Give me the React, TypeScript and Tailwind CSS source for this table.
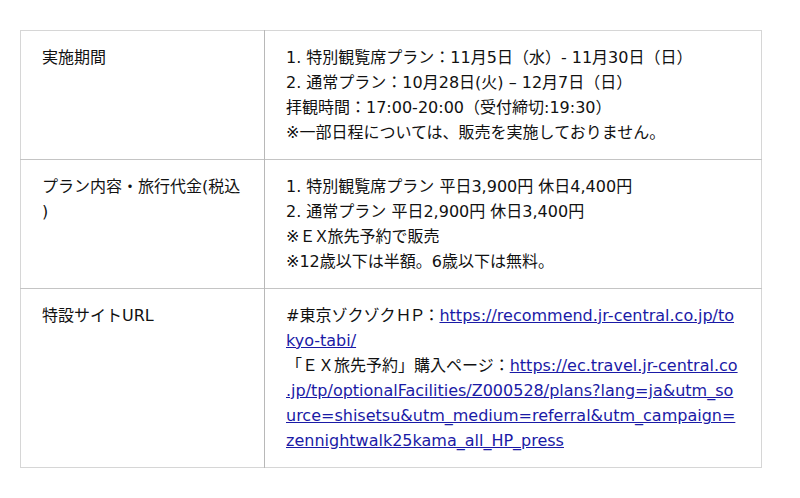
import type { ReactNode } from 'react'

// fullwidth latin in the reference sits a little tighter than Noto's 1em boxes
const Fw = ({ children }: { children: ReactNode }) => (
  <span className="tracking-[-2px]">{children}</span>
)

const periodLines = [
  '1. 特別観覧席プラン：11月5日（水）- 11月30日（日）',
  '2. 通常プラン：10月28日(火) – 12月7日（日）',
  '拝観時間：17:00-20:00（受付締切:19:30）',
  '※一部日程については、販売を実施しておりません。',
]

const travelUrl =
  'https://ec.travel.jr-central.co.jp/tp/optionalFacilities/Z000528/plans?lang=ja&utm_source=shisetsu&utm_medium=referral&utm_campaign=zennightwalk25kama_all_HP_press'

const cell = 'align-top pl-[21px] pr-[21px] pt-[14px] pb-[14px] [line-break:anywhere]'
const labelCell = `${cell} border-r border-[#b8b8b8]`

export default function App() {
  return (
    <div className="min-h-[498px] bg-white pt-[30px] pl-[20px] font-['DejaVu_Sans','Noto_Sans_CJK_JP',sans-serif] text-[16px] leading-[25px] text-[#111]">
      <table className="w-[742px] table-fixed border-collapse border border-[#d6d6d6]">
        <colgroup>
          <col className="w-[244px]" />
          <col />
        </colgroup>
        <tbody>
          <tr className="border-b border-[#c4c4c4]">
            <td className={labelCell}>実施期間</td>
            <td className={cell}>
              {periodLines.map((line) => (
                <div key={line}>{line}</div>
              ))}
            </td>
          </tr>
          <tr className="border-b border-[#c4c4c4]">
            <td className={labelCell}>プラン内容・旅行代金(税込)</td>
            <td className={cell}>
              <div>1. 特別観覧席プラン 平日3,900円 休日4,400円</div>
              <div>2. 通常プラン 平日2,900円 休日3,400円</div>
              <div>
                ※<Fw>ＥＸ</Fw>旅先予約で販売
              </div>
              <div>※12歳以下は半額。6歳以下は無料。</div>
            </td>
          </tr>
          <tr>
            <td className={labelCell}>特設サイトURL</td>
            <td className={`${cell} break-all`}>
              <div>
                #東京ゾクゾク<Fw>ＨＰ</Fw>：
                <a
                  href="https://recommend.jr-central.co.jp/tokyo-tabi/"
                  className="text-[#1a1aa6] underline"
                >
                  https://recommend.jr-central.co.jp/tokyo-tabi/
                </a>
              </div>
              <div>
                「ＥＸ旅先予約」購入ページ：
                <a href={travelUrl} className="text-[#1a1aa6] underline">
                  {travelUrl}
                </a>
              </div>
            </td>
          </tr>
        </tbody>
      </table>
    </div>
  )
}
